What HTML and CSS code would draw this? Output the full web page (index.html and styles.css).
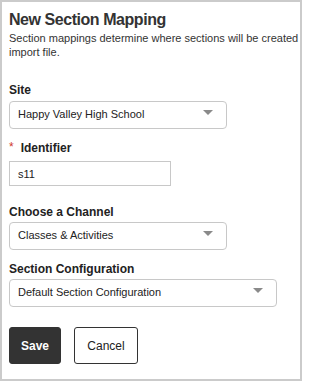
FILE: index.html
```html
<!DOCTYPE html>
<html>
<head>
<meta charset="utf-8">
<title>New Section Mapping</title>
<link rel="stylesheet" href="styles.css">
</head>
<body>
<div class="card">
  <h1 class="title">New Section Mapping</h1>
  <p class="desc">Section mappings determine where sections will be created from the import file.</p>

  <div class="field field-site">
    <label class="label label-site">Site</label>
    <div class="select select-md"><span class="select-text">Happy Valley High School</span><span class="caret"></span></div>
  </div>

  <div class="field field-id">
    <label class="label label-id"><span class="req">*</span>Identifier</label>
    <div class="input"><span class="select-text">s11</span></div>
  </div>

  <div class="field field-channel">
    <label class="label label-channel">Choose a Channel</label>
    <div class="select select-md"><span class="select-text">Classes &amp; Activities</span><span class="caret"></span></div>
  </div>

  <div class="field field-config">
    <label class="label label-config">Section Configuration</label>
    <div class="select select-lg"><span class="select-text">Default Section Configuration</span><span class="caret"></span></div>
  </div>

  <div class="actions">
    <button class="btn btn-primary">Save</button>
    <button class="btn btn-secondary">Cancel</button>
  </div>
</div>
</body>
</html>
```
FILE: styles.css
```css
html, body {
  margin: 0;
  padding: 0;
  background: #ffffff;
}

body {
  font-family: "Liberation Sans", Arial, Helvetica, sans-serif;
  color: #222222;
}

.card {
  box-sizing: border-box;
  width: 302px;
  height: 381px;
  border: 2px solid #cbcbcb;
  padding: 8px 0 0 7px;
  overflow: hidden;
}

.title {
  margin: 0;
  font-size: 16px;
  line-height: 20px;
  font-weight: 700;
  letter-spacing: -0.45px;
  color: #333333;
}

.desc {
  margin: 1px 0 0;
  width: 345px;
  font-size: 11px;
  line-height: 14px;
  color: #333333;
}

.field {
  display: flex;
  flex-direction: column;
  align-items: flex-start;
}

.field-site { margin-top: 24px; }
.field-id { margin-top: 12px; }
.field-channel { margin-top: 19px; }
.field-config { margin-top: 12px; }

.label {
  display: block;
  font-size: 12px;
  line-height: 15px;
  font-weight: 700;
  color: #222222;
}

.label-site { margin-bottom: 3px; }
.label-id { margin-bottom: 5px; }
.label-channel { margin-bottom: 2px; }
.label-config { margin-bottom: 2px; }

.req {
  color: #d0382b;
  font-weight: 400;
  margin-right: 7px;
  position: relative;
  top: -1px;
}

.select {
  box-sizing: border-box;
  height: 28px;
  border: 1px solid #c8c8c8;
  border-radius: 4px;
  display: flex;
  align-items: center;
  padding: 0 0 2px 8px;
  background: #ffffff;
}

.select-md { width: 218px; }
.select-lg { width: 268px; }

.select-text {
  font-size: 11px;
  line-height: 14px;
  color: #222222;
}

.caret {
  margin-left: auto;
  margin-right: 13px;
  margin-bottom: 3px;
  width: 0;
  height: 0;
  border-left: 5px solid transparent;
  border-right: 5px solid transparent;
  border-top: 5px solid #8a8a8a;
}

.input {
  box-sizing: border-box;
  width: 162px;
  height: 25px;
  border: 1px solid #c8c8c8;
  display: flex;
  align-items: center;
  padding: 0 0 0 8px;
}

.actions {
  display: flex;
  gap: 13px;
  margin-top: 20px;
}

.btn {
  box-sizing: border-box;
  height: 37px;
  border-radius: 3px;
  font-family: "Liberation Sans", Arial, Helvetica, sans-serif;
  font-size: 12px;
  padding: 0;
  cursor: pointer;
}

.btn-primary {
  width: 52px;
  background: #333333;
  border: 1px solid #333333;
  color: #ffffff;
  font-weight: 700;
}

.btn-secondary {
  width: 64px;
  background: #ffffff;
  border: 1px solid #333333;
  color: #222222;
}
```
